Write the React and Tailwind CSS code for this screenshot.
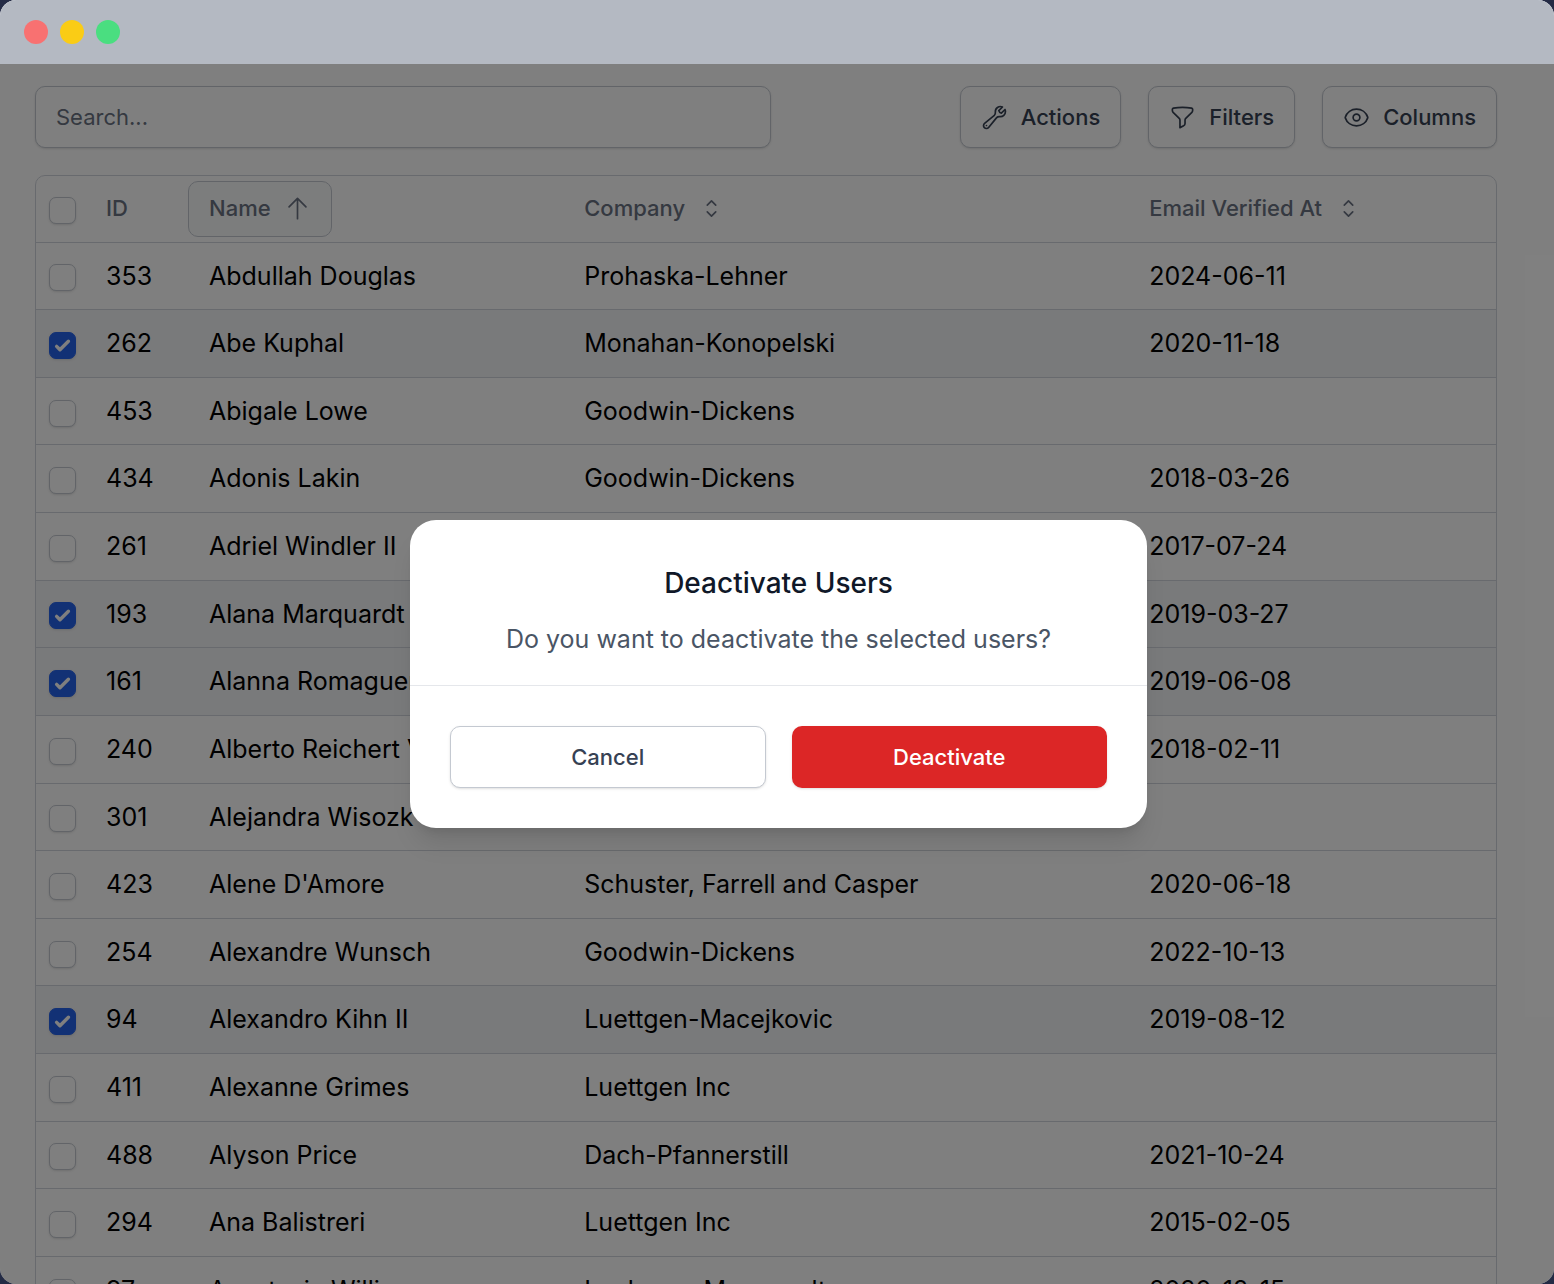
import React from "react";
import {
  HiOutlineWrench,
  HiOutlineFunnel,
  HiOutlineEye,
  HiOutlineArrowUp,
  HiOutlineChevronUpDown,
} from "react-icons/hi2";

const users = [
  ["353", "Abdullah Douglas", "Prohaska-Lehner", "2024-06-11", false],
  ["262", "Abe Kuphal", "Monahan-Konopelski", "2020-11-18", true],
  ["453", "Abigale Lowe", "Goodwin-Dickens", "", false],
  ["434", "Adonis Lakin", "Goodwin-Dickens", "2018-03-26", false],
  ["261", "Adriel Windler II", "", "2017-07-24", false],
  ["193", "Alana Marquardt", "", "2019-03-27", true],
  ["161", "Alanna Romaguera", "", "2019-06-08", true],
  ["240", "Alberto Reichert V", "", "2018-02-11", false],
  ["301", "Alejandra Wisozk", "", "", false],
  ["423", "Alene D'Amore", "Schuster, Farrell and Casper", "2020-06-18", false],
  ["254", "Alexandre Wunsch", "Goodwin-Dickens", "2022-10-13", false],
  ["94", "Alexandro Kihn II", "Luettgen-Macejkovic", "2019-08-12", true],
  ["411", "Alexanne Grimes", "Luettgen Inc", "", false],
  ["488", "Alyson Price", "Dach-Pfannerstill", "2021-10-24", false],
  ["294", "Ana Balistreri", "Luettgen Inc", "2015-02-05", false],
  ["97", "Anastasia Williamson", "Lockman-Marquardt", "2020-12-15", false],
];

function Checkbox({ label, checked = false }) {
  return (
    <span className="relative mt-1 ml-[13px] block size-[27px]">
      <input
        type="checkbox"
        aria-label={label}
        defaultChecked={checked}
        className="peer block size-full appearance-none rounded-[7px] border border-[#c4c9d1] bg-white shadow-sm checked:border-[#2563eb] checked:bg-[#2563eb]"
      />
      <svg
        viewBox="0 0 16 16"
        fill="white"
        aria-hidden="true"
        className="pointer-events-none absolute inset-0 hidden size-full peer-checked:block"
      >
        <path d="M12.207 4.793a1 1 0 0 1 0 1.414l-5 5a1 1 0 0 1-1.414 0l-2-2a1 1 0 0 1 1.414-1.414L6.5 9.086l4.293-4.293a1 1 0 0 1 1.414 0z" />
      </svg>
    </span>
  );
}

function ToolbarButton({ icon: Icon, children }) {
  return (
    <button
      type="button"
      className="flex h-[62px] items-center gap-[13px] rounded-[10px] border border-[#c4c9d1] bg-white px-5 text-[22px] font-medium text-gray-700 shadow-sm"
    >
      <Icon className="size-[27px]" />
      {children}
    </button>
  );
}

function SortHeader({ children }) {
  return (
    <button type="button" className="flex items-center gap-[13px] px-[21px]">
      {children}
      <HiOutlineChevronUpDown className="size-[27px]" />
    </button>
  );
}

function UsersTable() {
  return (
    <div className="overflow-hidden rounded-t-[10px] border border-gray-300">
      <table className="w-full table-fixed text-left">
        <colgroup>
          <col className="w-[50px]" />
          <col className="w-[102px]" />
          <col className="w-[25.7%]" />
          <col className="w-[38.7%]" />
          <col />
        </colgroup>
        <thead>
          <tr className="h-[66px] text-[22px] text-gray-500">
            <th scope="col">
              <Checkbox label="Select all users" />
            </th>
            <th scope="col" className="px-5 font-medium">ID</th>
            <th scope="col" className="font-medium">
              <button
                type="button"
                className="flex h-14 items-center gap-[13px] rounded-[10px] border border-[#c4c9d1] bg-gray-50 px-5"
              >
                Name
                <HiOutlineArrowUp className="size-[27px]" />
              </button>
            </th>
            <th scope="col" className="font-medium">
              <SortHeader>Company</SortHeader>
            </th>
            <th scope="col" className="font-medium">
              <SortHeader>Email Verified At</SortHeader>
            </th>
          </tr>
        </thead>
        <tbody className="text-[25px] leading-relaxed whitespace-nowrap text-black">
          {users.map(([id, name, company, verified, selected]) => (
            <tr
              key={id}
              className={selected ? "border-t border-gray-300 bg-gray-100" : "border-t border-gray-300"}
            >
              <td>
                <Checkbox label={"Select " + name} checked={selected} />
              </td>
              <td className="px-5 py-[13px]">{id}</td>
              <td className="px-[21px] py-[13px]">{name}</td>
              <td className="px-[21px] py-[13px]">{company}</td>
              <td className="px-[21px] py-[13px]">{verified}</td>
            </tr>
          ))}
        </tbody>
      </table>
    </div>
  );
}

function ConfirmDialog() {
  return (
    <div
      role="dialog"
      aria-modal="true"
      aria-labelledby="dialog-title"
      aria-describedby="dialog-text"
      className="w-full max-w-[737px] rounded-[26px] bg-white shadow-xl"
    >
      <div className="border-b border-gray-200 px-10 pt-10 pb-[26px] text-center">
        <h2 id="dialog-title" className="text-[28px] leading-[46px] font-medium text-gray-900">
          Deactivate Users
        </h2>
        <p id="dialog-text" className="mt-[13px] text-[25px] leading-[40px] text-gray-600">
          Do you want to deactivate the selected users?
        </p>
      </div>
      <div className="grid grid-cols-2 gap-[26px] p-10 text-[22px] font-medium">
        <button
          type="button"
          className="h-[62px] rounded-[10px] border border-[#c4c9d1] bg-white text-gray-700 shadow-sm"
        >
          Cancel
        </button>
        <button type="button" className="h-[62px] rounded-[10px] bg-[#dc2626] text-white shadow-sm">
          Deactivate
        </button>
      </div>
    </div>
  );
}

export default function App() {
  return (
    <div className="h-screen bg-[#242b45] font-['Inter',sans-serif]">
      <div className="flex h-full flex-col overflow-hidden rounded-2xl bg-white">
        <header className="flex h-16 shrink-0 items-center gap-3 bg-[#b4b9c2] px-6">
          <span className="size-6 rounded-full bg-[#f87171]" />
          <span className="size-6 rounded-full bg-[#facc15]" />
          <span className="size-6 rounded-full bg-[#4ade80]" />
        </header>
        <div className="relative min-h-0 flex-1 overflow-hidden">
          <main className="pt-[22px] pr-[57px] pl-[35px]">
            <div className="mb-[27px] flex items-center gap-[27px]">
              <input
                type="search"
                aria-label="Search"
                placeholder="Search..."
                className="mr-auto h-[62px] w-[736px] min-w-0 shrink rounded-[10px] border border-[#c4c9d1] bg-white px-5 text-[22px] shadow-sm placeholder:text-gray-500"
              />
              <ToolbarButton icon={HiOutlineWrench}>Actions</ToolbarButton>
              <ToolbarButton icon={HiOutlineFunnel}>Filters</ToolbarButton>
              <ToolbarButton icon={HiOutlineEye}>Columns</ToolbarButton>
            </div>
            <UsersTable />
          </main>
          <div className="absolute inset-0 flex items-center justify-center bg-black/50 pl-[3px]">
            <ConfirmDialog />
          </div>
        </div>
      </div>
    </div>
  );
}
